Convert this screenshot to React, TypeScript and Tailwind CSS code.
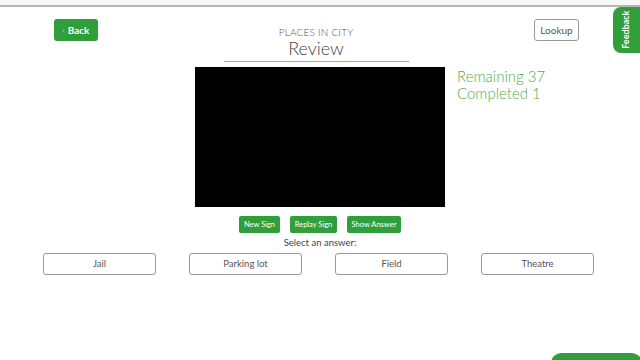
import React from 'react';

const answers = ['Jail', 'Parking lot', 'Field', 'Theatre'];

export default function App() {
  return (
    <div className="relative h-[360px] w-[640px] overflow-hidden bg-white font-['Lato',sans-serif] text-[#555]">
      {/* cut-off top strip */}
      <div className="h-[7px] border-b-2 border-[#b5b5b5] bg-[#f7f7f7]" />

      {/* header */}
      <div className="flex items-start justify-between pl-[54px] pr-[61px] pt-[12px]">
        <button className="flex h-[22px] w-[44px] items-center justify-center gap-[3px] rounded-[3px] bg-[#2f9e3b] text-[10px] font-bold text-white">
          <span className="text-[8px] font-light">&lsaquo;</span> Back
        </button>
        <div className="flex flex-col items-center pt-[8px]">
          <div className="text-[10px] font-light leading-[10px] tracking-[0.2px] text-[#555]">PLACES IN CITY</div>
          <div className="w-[185px] border-b border-[#aaa] pb-[2px] text-center text-[18px] font-light leading-[22px] text-[#444]">
            Review
          </div>
        </div>
        <button className="h-[22px] w-[45px] rounded-[3px] border border-[#999] bg-white text-[10px] text-[#555]">
          Lookup
        </button>
      </div>

      {/* video + stats */}
      <div className="mt-[5px] grid grid-cols-[1fr_250px_1fr] gap-[12px]">
        <div />
        <div className="h-[140px] bg-black" />
        <div className="pt-[1px] text-[15px] font-light leading-[17px] text-[#4cae50]">
          <div>Remaining 37</div>
          <div>Completed 1</div>
        </div>
      </div>

      {/* controls */}
      <div className="mt-[9px] flex justify-center gap-[10px]">
        <button className="h-[17px] w-[41px] rounded-[2px] bg-[#2f9e3b] text-[7.5px] text-white">New Sign</button>
        <button className="h-[17px] w-[47px] rounded-[2px] bg-[#2f9e3b] text-[7.5px] text-white">Replay Sign</button>
        <button className="h-[17px] w-[54px] rounded-[2px] bg-[#2f9e3b] text-[7.5px] text-white">Show Answer</button>
      </div>
      <div className="mt-[4px] text-center text-[9.5px] leading-[11px] text-[#444]">Select an answer:</div>

      <div className="mt-[5px] flex justify-center gap-[33px] pr-[3px]">
        {answers.map((a) => (
          <button
            key={a}
            className="h-[22px] w-[113px] rounded-[3px] border border-[#999] bg-white text-[9.5px] text-[#555]"
          >
            {a}
          </button>
        ))}
      </div>

      {/* feedback tab */}
      <div className="absolute right-0 top-[7px] flex h-[46px] w-[27px] items-center justify-center rounded-l-[8px] bg-[#2f9e3b]">
        <span className="-rotate-90 whitespace-nowrap text-[9px] font-bold text-white">Feedback</span>
      </div>

      {/* bottom-right pill, cut off */}
      <div className="absolute bottom-[-14px] right-[-2px] h-[21px] w-[91px] rounded-full bg-[#2f9e3b]" />
    </div>
  );
}
